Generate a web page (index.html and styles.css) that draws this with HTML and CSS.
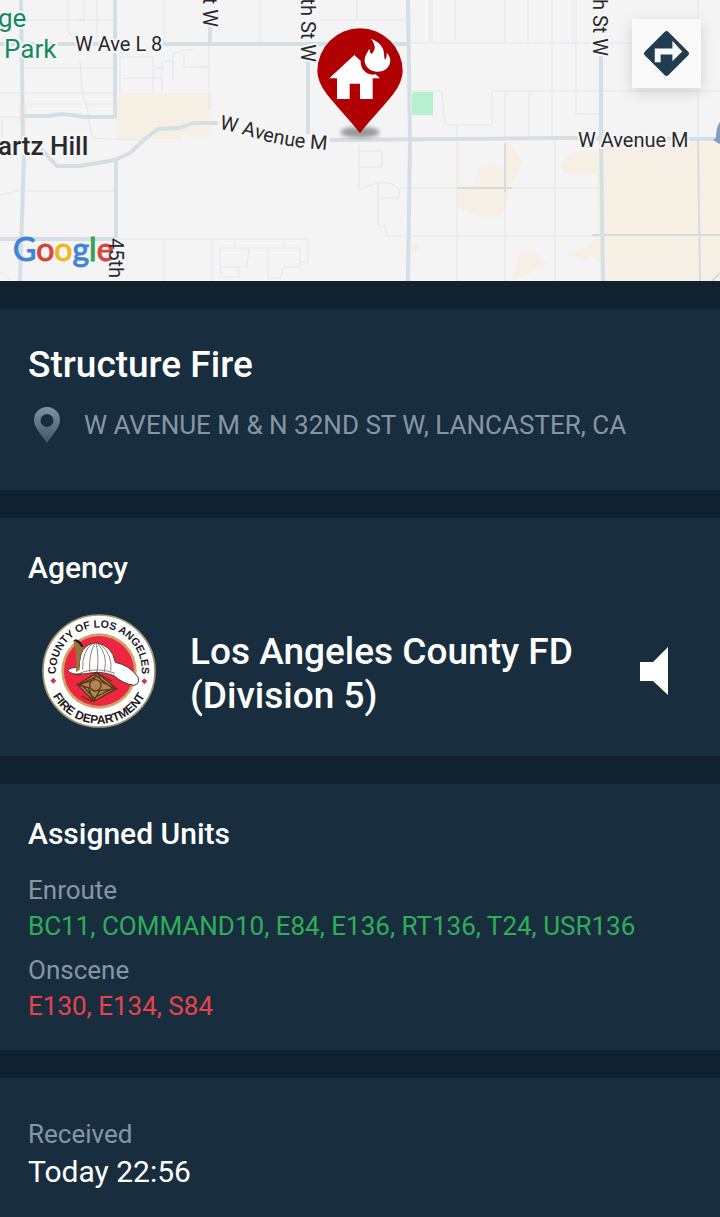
FILE: index.html
```html
<!DOCTYPE html>
<html lang="en">
<head>
    <meta charset="UTF-8">
    <meta name="viewport" content="width=device-width, initial-scale=1.0">
    <title>Structure Fire</title>
    <link rel="stylesheet" href="styles.css">
</head>
<body>

<div class="map">
    <svg class="map-canvas" viewBox="0 0 720 281" preserveAspectRatio="xMidYMid slice">
        <defs>
            <path id="avenueM" d="M219 129 Q240 133 262 140 T329 150"/>
            <filter id="soft" x="-30%" y="-100%" width="160%" height="300%"><feGaussianBlur stdDeviation="7"/></filter>
        </defs>

        <!-- land -->
        <g class="sand">
            <path d="M120 93H212V137H194L182 132V139H116V104Z"/>
            <path d="M18 104H27V125H18Z"/>
            <path d="M457 142H460V185H474L478 168L490 165L504 168V142H509L522 160L516 177L512 186L506 207L500 217H482L457 208Z"/>
            <path d="M561 164L572 153L598 150L602 142H720V281H600V263L592 256L584 260L566 254L590 246L597 230V174H563Z"/>
            <path d="M521 251L537 253L547 264L533 270L526 276L512 280Z"/>
            <path d="M411 243H419V251H411Z"/>
        </g>
        <path class="park" d="M412 94Q412 92 415 92H433V115H412Z"/>

        <!-- small streets -->
        <path class="street" d="M68 0V32L80 45M84 0V20H74M97 0V40M22 20H115M164 0V44M22 68H115M80 60L82 92L87 107L92 138L140 140M0 93H115M25 104H115M0 117H22M2 120V138
            M120 93V57H153V93M122 78H162M162 60V93M155 68H165M173 80V53L193 49M184 54V67H209M209 46V110M174 61H164
            M0 195L18 191H115M0 272L10 280M0 20H20
            M260 0V44M357 0V20M320 20H408M432 0V42M200 67H210
            M430 0V42M455 0V40M505 0V43M528 0V43M552 0V140M573 0V43M576 0V115M577 114H601M698 0V20M698 88V140
            M410 43H632M410 91H442L445 125H492V91H720M505 91V140M529 91V140M457 125V140
            M457 140V281M505 190V281M555 140V281M410 188H601M410 236H601
            M359 145V189L380 182L392 184L400 190L398 198H377M359 151H382V167H359M378 182V226H386V236H410M400 188H410
            M116 239H308V262H300V248H220L221 277H239V267M212 239V281M164 239V281M235 239V248M284 239V248M268 248V278H281L283 267H300V262M221 267H247L249 248"/>
        <path class="lane" d="M457 188H512M505 143V192M592 235H720M698 140L700 281M712 281L720 273"/>

        <!-- main roads -->
        <path class="road" d="M0 44H115M160 44H408M21 0L23 140M24 155L20 281M115 0V117H84Q60 112 50 116H23M210 25V44M308 60V134M41 149L57 166H80L115 160L130 153L146 138L158 129L180 128L193 123H218M116 160V238M0 239H113"/>
        <path class="road" d="M330 140L560 138L720 139M408 0L410 140L408 281M601 56V140L603 281"/>
        <path class="shield" d="M720 122Q716 127 716 138L713 140L720 144Z"/>

        <!-- labels -->
        <g class="place-name">
            <text class="park-name" x="-2" y="27">ge</text>
            <text class="park-name" x="4" y="58">Park</text>
            <text class="town-name" x="-2" y="155">artz Hill</text>
        </g>
        <text class="google" x="13" y="261"><tspan class="g-blue">G</tspan><tspan class="g-red">o</tspan><tspan class="g-yellow">o</tspan><tspan class="g-blue">g</tspan><tspan class="g-green">l</tspan><tspan class="g-red">e</tspan></text>
        <g class="street-name">
            <text x="75" y="51">W Ave L 8</text>
            <text x="578" y="147">W Avenue M</text>
            <text><textPath href="#avenueM">W Avenue M</textPath></text>
            <text transform="translate(203 27) rotate(90)" text-anchor="end">St W</text>
            <text transform="translate(301 62) rotate(90)" text-anchor="end">30th St W</text>
            <text transform="translate(593 56) rotate(90)" text-anchor="end">20th St W</text>
            <text class="over-logo" transform="translate(109 238) rotate(90)">45th</text>
        </g>

        <!-- incident pin -->
        <g transform="translate(200 0) scale(.33333)">
            <ellipse class="pin-shadow" cx="480" cy="397" rx="58" ry="17" filter="url(#soft)"/>
            <path class="pin" d="M480 400C450 360 408 318 380 282Q352 245 352 213A128 128 0 0 1 608 213Q608 245 580 282C552 318 510 360 480 400Z"/>
            <path class="pin-art" d="M388 235L463 165L482 182C481 207 497 222 518 224L527 223L540 235H518V297H480V251H449V297H411V235Z"/>
            <path class="pin-art" d="M513 116C542 127 552 145 552 162Q552 174 555 179Q561 175 560 158C571 169 572 179 570 188C567 206 548 216 530 215C508 214 492 198 494 178C496 163 504 155 508 146Q510 158 514 163Q526 152 524 139Q522 126 513 116Z"/>
        </g>
    </svg>

    <button class="directions" type="button" aria-label="Directions">
        <svg viewBox="0 0 48 48">
            <path class="sign" d="M22 2Q24 0 26 2L46 22Q48 24 46 26L26 46Q24 48 22 46L2 26Q0 24 2 22Z"/>
            <path class="arrow" d="M12 33V19H30V11L40 22L30 32V25H18V33Z"/>
        </svg>
    </button>
</div>

<main>
    <section class="card incident">
        <h1>Structure Fire</h1>
        <p class="address">
            <svg viewBox="0 0 26 36">
                <defs>
                    <linearGradient id="pinFade" x1="0" y1="0" x2="0" y2="1">
                        <stop offset="0" stop-color="#8393a1"/>
                        <stop offset="1" stop-color="#3f5568"/>
                    </linearGradient>
                </defs>
                <path fill="url(#pinFade)" fill-rule="evenodd" d="M13 0A13 13 0 0 1 26 13C26 21 18 28 13 36C8 28 0 21 0 13A13 13 0 0 1 13 0ZM13 7A6 6 0 0 0 13 20A6 6 0 0 0 13 7Z"/>
            </svg>
            <span>W AVENUE M &amp; N 32ND ST W, LANCASTER, CA</span>
        </p>
    </section>

    <section class="card agency">
        <h2>Agency</h2>
        <div class="agency-row">
            <svg class="seal" viewBox="38 29 342 342" role="img" aria-label="Los Angeles County Fire Department">
                <defs>
                    <path id="sealTop" d="M83 220A128 128 0 1 1 335 220"/>
                    <path id="sealBottom" d="M54 220A156 156 0 0 0 364 220"/>
                </defs>
                <circle class="seal-rim" cx="209" cy="200" r="168"/>
                <circle class="seal-edge" cx="209" cy="200" r="113"/>
                <circle class="seal-red" cx="209" cy="200" r="105"/>
                <text class="seal-text"><textPath href="#sealTop" startOffset="50%">COUNTY OF LOS ANGELES</textPath></text>
                <text class="seal-text seal-dept"><textPath href="#sealBottom" startOffset="50%">FIRE DEPARTMENT</textPath></text>
                <path class="seal-mark" d="M72 220L81 229L72 238L63 229ZM345 222L354 231L345 240L336 231Z"/>
                <path class="helmet" d="M116 198Q118 190 150 188Q150 118 200 116Q248 122 258 174Q300 182 326 218Q332 240 314 243Q280 238 254 214Q215 198 170 208Q122 214 116 198Z"/>
                <path class="helmet-rib" d="M160 196Q158 140 190 117M181 203Q178 150 196 117M203 203Q210 155 200 117M225 203Q237 150 205 118M244 202Q252 155 214 120M154 205Q205 187 257 207"/>
                <path class="horn" d="M132 108Q145 100 159 119L164 132Q149 153 151 196L140 204Q143 150 132 108Z"/>
                <path class="horn-tip" d="M132 108Q147 98 163 126L156 129Q148 112 132 108Z"/>
                <path class="badge" d="M203 205L261 253L193 291L145 241Z"/>
                <path class="badge-line" d="M203 205L192 228L145 241L177 250L193 291L211 259L261 253L219 234ZM154 239L202 216L250 252L194 281Z"/>
                <circle class="badge-core" cx="198" cy="243" r="17"/>
                <path class="badge-line" d="M139 212L157 208M209 209L248 231M157 276L188 292"/>
            </svg>
            <p class="agency-name">Los Angeles County FD (Division 5)</p>
            <button class="speaker" type="button" aria-label="Listen">
                <svg viewBox="0 0 28 48"><path d="M0 15H13L28 0V48L13 34H0Z"/></svg>
            </button>
        </div>
    </section>

    <section class="card units">
        <h2>Assigned Units</h2>
        <dl>
            <dt>Enroute</dt>
            <dd class="enroute">BC11, COMMAND10, E84, E136, RT136, T24, USR136</dd>
            <dt>Onscene</dt>
            <dd class="onscene">E130, E134, S84</dd>
        </dl>
    </section>

    <section class="card received">
        <dl>
            <dt>Received</dt>
            <dd>Today 22:56</dd>
        </dl>
    </section>
</main>

</body>
</html>
```
FILE: styles.css
```css
* {
    box-sizing: border-box;
}

body {
    margin: 0;
    min-height: 100vh;
    display: flex;
    flex-direction: column;
    font-family: Roboto, sans-serif;
    background-color: #11212d;
    color: #fff;
}

h1, h2, p, dl, dd {
    margin: 0;
}

button {
    padding: 0;
    border: none;
    background: none;
    cursor: pointer;
}

/* map */
.map {
    position: relative;
    overflow: hidden;
    background-color: #f4f4f5;
}

.map-canvas {
    display: block;
    width: 100%;
}

.sand { fill: #f6f0e4; }
.park { fill: #b5f1cf; }
.shield { fill: #7f9fc0; }

.street, .lane, .road {
    fill: none;
    stroke: #e2e6eb;
    stroke-width: 1;
}

.lane {
    stroke: #d3dce2;
    stroke-width: 2;
}

.road {
    stroke: #d4dee5;
    stroke-width: 4;
    stroke-linejoin: round;
}

.street-name, .place-name {
    font-size: 20px;
    fill: #28292c;
    stroke: #f6f6f7;
    stroke-width: 4;
    stroke-linejoin: round;
    paint-order: stroke;
}

.place-name {
    font-size: 26px;
    font-weight: 500;
}

.park-name {
    font-weight: 400;
    fill: #148a5d;
}

.over-logo {
    stroke: none;
}

.google {
    font-family: Lato, sans-serif;
    font-size: 32px;
    stroke-width: 1;
}

.g-blue { fill: #4183d7; stroke: #4183d7; }
.g-red { fill: #d8453e; stroke: #d8453e; }
.g-yellow { fill: #efb81c; stroke: #efb81c; }
.g-green { fill: #36a259; stroke: #36a259; }

.pin { fill: #b10003; }
.pin-art { fill: #fff; }
.pin-shadow { fill: #999; }

.directions {
    position: absolute;
    top: 19px;
    right: 19px;
    width: 69px;
    height: 69px;
    display: grid;
    place-items: center;
    background-color: #f9f9fa;
    box-shadow: 0 4px 14px rgba(0, 0, 0, 0.14);
}

.directions svg {
    width: 47px;
    height: 47px;
}

.sign { fill: #233d50; }
.arrow { fill: #f9f9fa; }

/* cards */
main {
    flex: 1;
    display: flex;
    flex-direction: column;
    gap: 28px;
    padding-top: 28px;
}

.card {
    padding: 32px 28px;
    background-color: #182e3f;
}

h1 {
    font-size: 37px;
    line-height: 48px;
    font-weight: 500;
}

h2 {
    font-size: 30px;
    line-height: 36px;
    font-weight: 500;
}

.address {
    display: flex;
    align-items: center;
    gap: 24px;
    margin-top: 16px;
    padding-left: 6px;
    font-size: 26px;
    line-height: 40px;
    color: #8796a4;
}

.address svg {
    flex: none;
    width: 26px;
    height: 36px;
}

.incident {
    padding-bottom: 45px;
}

/* agency */
.agency-row {
    display: flex;
    align-items: center;
    margin-top: 28px;
    padding: 0 24px 0 14px;
}

.agency {
    padding-bottom: 28px;
}

.seal {
    flex: none;
    width: 114px;
    height: 114px;
}

.agency-name {
    flex: 1;
    margin: 0 32px 0 34px;
    padding-top: 6px;
    font-size: 37px;
    line-height: 44px;
    font-weight: 500;
}

.speaker {
    flex: none;
    display: flex;
}

.speaker svg {
    width: 28px;
    height: 48px;
    fill: #fff;
}

.seal-rim {
    fill: #fff;
    stroke: #a1976f;
    stroke-width: 5;
}

.seal-edge { fill: #cda56c; }
.seal-red { fill: #ee2640; }
.seal-mark { fill: #d43550; }

.seal-text {
    font-family: "Liberation Sans", sans-serif;
    font-size: 32px;
    font-weight: 700;
    text-anchor: middle;
    fill: #1d1d1d;
}

.seal-dept {
    font-size: 36px;
}

.helmet {
    fill: #fff;
    stroke: #4d3531;
    stroke-width: 3;
}

.helmet-rib {
    fill: none;
    stroke: #8c8581;
    stroke-width: 3;
}

.horn { fill: #98713f; }
.horn-tip { fill: #211b18; }

.badge, .badge-core {
    fill: #b08550;
    stroke: #5b3519;
    stroke-width: 4;
}

.badge-line {
    fill: none;
    stroke: #5b3519;
    stroke-width: 4;
}

/* units */
.units dl {
    margin-top: 20px;
}

.units {
    padding-bottom: 26px;
}

dt {
    font-size: 26px;
    line-height: 36px;
    color: #8796a4;
}

dd {
    font-size: 26px;
    line-height: 36px;
}

.enroute {
    margin-bottom: 8px;
    color: #2fae58;
}

.onscene {
    color: #e8434a;
}

.received {
    flex: 1;
    padding: 38px 28px 24px;
}

.received dd {
    font-size: 30px;
    line-height: 40px;
}
```
